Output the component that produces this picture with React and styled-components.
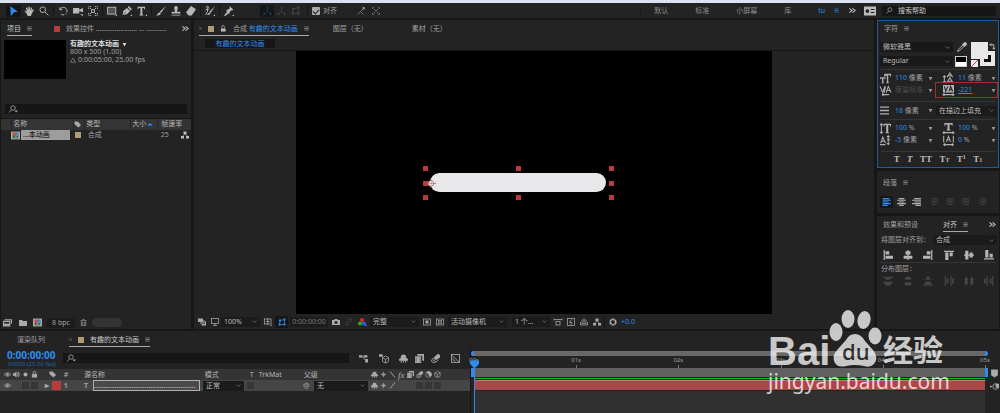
import React from "react";
import styled, { createGlobalStyle, css } from "styled-components";

const c = {
  gap: "#171717",
  panel: "#232323",
  field: "#161616",
  head: "#343434",
  text: "#a0a0a0",
  bright: "#c8c8c8",
  blue: "#2d8ceb",
  navy: "#1f62a5",
  tan: "#b09b75",
  red: "#b93b3b",
};

const Global = createGlobalStyle`
  * { box-sizing: border-box; }
  body { margin: 0; background: ${c.gap}; }
  body, button, input, select {
    font-family: "Noto Sans", "Noto Sans CJK SC", sans-serif;
    font-size: 7px;
    line-height: 10px;
    color: ${c.text};
  }
  button { background: none; border: 0; padding: 0; margin: 0; cursor: pointer; white-space: nowrap; }
  input { margin: 0; }
  svg { display: block; flex: none; overflow: visible; }
`;

/* ---------- icons, all on a 16 unit grid ---------- */
const P = (d, o) => <path d={d} {...o} />;
const F = (d) => <path d={d} fill="currentColor" stroke="none" />;
const cube = P("M8 1L14 4V12L8 15L2 12V4ZM2 4L8 8L14 4M8 8V15");
const glyphs = {
  arrow: F("M2 0L14 9L8 10L3 16Z"),
  hand: F("M1 8L3 7L5 9L3 3L5 2L7 7L7 1L9 1L10 7L11 2L13 3L12 8L14 5L16 6L12 13L11 16H6L4 12Z"),
  zoom: <><circle cx="6" cy="6" r="4.5" />{P("M9.5 9.5L15 15")}</>,
  rotate: P("M3 2V6H7M3 6A6 6 0 1 1 5 13", { strokeDasharray: "18 2 2 2" }),
  camera: F("M0 4Q0 3 1 3H10V6L16 3V10L10 8V12H0ZM11 13L16 13L16 16Z"),
  anchor: <>{P("M1 5V1H5M11 1H15V5M15 11V15H11M5 15H1V11", { strokeDasharray: "2 1" })}<circle cx="8" cy="8" r="2.5" />{P("M3 3L6 6M13 3L10 6M3 13L6 10M13 13L10 10")}</>,
  rect: <><rect x="1" y="2" width="13" height="11" fill="#555" />{F("M13 16H16V13Z")}</>,
  pen: F("M1 15L2 8L8 3L13 8L8 13L2 14.500L6 10L5.500 9ZM9 2L11 0L16 5L14 7ZM13 16H16V13Z"),
  type: F("M1 1H13V5H12L11 3H8.500V13L10 14V15H4V14L5.500 13V3H3L2 5H1ZM13 16H16V13Z"),
  brush: F("M16 0L8 11L6 9ZM5 10L8 12Q6 16 0 15Q3 14 3 12Z"),
  stamp: F("M5 3A3 3 0 0 1 11 3L9.500 9H15V12H1V9H6.500ZM1 14H15V15H1Z"),
  eraser: F("M8 0L16 5L9 15H4L0 10ZM4 11L7 14H5Z"),
  roto: <>{F("M16 0L9 11L7 9ZM7 10L9 12Q7 15 3 14ZM13 16H16V13Z")}<circle cx="4" cy="2" r="1.500" />{P("M4 4V9L1 14M1 6L7 5")}</>,
  pin: F("M9 0L15 6L13 7L11 7L9 10L9 12L7 12L2 16L0 15L5 9L4 8L4 6L6 6L9 4ZM13 16H16V13Z"),
  axis: <>{P("M8 2V9L2 14M8 9L14 14")}{F("M8 0L10 4H6ZM0 16L2 11L5 15ZM16 16L11 15L14 11Z")}</>,
  snap1: <>{P("M1 15L7 9L13 15M7 9L13 3")}{F("M11 0H16V5H11Z")}</>,
  snap2: <>{P("M1 4V1H4M12 1H15V4M15 12V15H12M4 15H1V12M4 4L12 12M12 4L4 12", { strokeDasharray: "3 1" })}</>,
  close: P("M2 2L14 14M14 2L2 14", { strokeWidth: 4 }),
  menu: P("M1 3H15M1 8H15M1 13H15"),
  chevrons: P("M1 3L7 8L1 13M8 3L14 8L8 13", { strokeWidth: 2.500 }),
  card: <>{F("M0 2H16V14H0Z")}<circle cx="4.500" cy="8" r="2.500" fill="#232323" stroke="none" />{P("M9 6H14M9 10H14", { stroke: "#232323" })}</>,
  search: <><circle cx="9" cy="6" r="4.500" />{P("M6 9.500L1 15")}</>,
  searchDown: <><circle cx="8" cy="6" r="4.500" />{P("M5 9.500L0 15")}{F("M11 11H18L14.500 15Z")}</>,
  chevron: P("M2 5L8 11L14 5"),
  down: F("M2 3H14L8 14Z"),
  up: F("M0 12H16L8 5Z"),
  right: F("M2 2V14L15 8Z"),
  lock: <>{F("M2 7H14V15H2Z")}{P("M5 7V4A3 3 0 0 1 11 4V7", { strokeWidth: 2 })}</>,
  unlock: <>{F("M2 8H13V15H2Z")}{P("M4 8V4A3 3 0 0 1 10 4V7")}</>,
  tag: F("M1 1H7L10 3L16 9L10 15L1 7Z"),
  tree: <>{F("M5 1H11V6H5ZM0 10H6V15H0ZM10 10H16V15H10Z")}{P("M8 6L3 10M8 6L13 10")}</>,
  triangle: P("M8 3L15 14H1Z"),
  comp: <><rect x="0" y="1" width="16" height="14" fill="#aaa" stroke="none" /><rect x="3" y="3" width="10" height="10" fill="#555" stroke="none" /><circle cx="6" cy="6" r="3" fill="#d44" stroke="none" /><rect x="8" y="4" width="5" height="5" fill="#39c" stroke="none" /><path d="M8 8L12 13H5Z" fill="#5a5" stroke="none" /></>,
  footage: <>{P("M3 3H15V10M1 6V14H12V6Z", { strokeWidth: 2 })}{F("M1 10H12V14H1Z")}</>,
  folder: F("M0 2H6L8 4H16V14H0Z"),
  trash: <>{F("M6 0H10V2H15V4H1V2H6Z")}{P("M3 5V15H13V5M6 6V13M10 6V13", { strokeWidth: 2 })}</>,
  layers: <>{F("M0 1H10V8H0ZM11 4H13V11H4V9H11ZM14 7H16V15H7V12H14Z")}</>,
  monitor: <><rect x="1" y="1" width="14" height="10" />{P("M8 11V14M4 15H12")}</>,
  region: <><rect x="1" y="2" width="13" height="10" />{P("M7.500 0V14M4 7H11M13 15H16")}</>,
  mask: <>{P("M3 13L4 5L13 3V13Z")}{F("M1 11H5V15H1ZM2 3H6V7H2ZM11 1H15V5H11ZM11 11H15V15H11Z")}</>,
  photo: <>{F("M0 4H4L6 2H10L12 4H16V14H0Z")}<circle cx="8" cy="9" r="3" fill="#232323" stroke="none" /></>,
  link: <>{P("M7 4L10 1Q14 1 13 5L10 8M9 7L5 6L1 10Q1 15 5 14L9 11")}</>,
  rgb: <><circle cx="8" cy="4" r="4" fill="#e32222" stroke="none" /><circle cx="4" cy="11" r="4" fill="#20b020" stroke="none" /><circle cx="12" cy="11" r="4" fill="#3157ef" stroke="none" />{F("M14 16H17V13Z")}</>,
  boxed: <><rect x="1" y="2" width="14" height="12" />{F("M5 5H11V11H5Z")}</>,
  checker: <><rect x="1" y="2" width="14" height="12" />{F("M4 4H7V7H4ZM9 4H12V7H9ZM7 7H9V9H7ZM4 9H7V12H4ZM9 9H12V12H9Z")}</>,
  views: <>{P("M0 3H16M0 1V5M16 1V5")}<rect x="4" y="7" width="8" height="7" /></>,
  fast: <><rect x="1" y="1" width="14" height="14" />{P("M9 3L5 9H10L7 14")}</>,
  chart: <>{P("M1 8V14H15V8M4 3V11H12V3")}{F("M7 1H9V9H7Z")}</>,
  aperture: <><circle cx="8" cy="8" r="5.500" strokeWidth="3.500" strokeDasharray="5 .8" /></>,
  eye: <>{P("M0 8Q8 0 16 8Q8 16 0 8Z")}<circle cx="8" cy="8" r="2.500" fill="currentColor" /></>,
  speaker: <>{F("M0 5H3L8 1V15L3 11H0Z")}{P("M10 4Q13 8 10 12M12 2Q17 8 12 14", { strokeWidth: 2 })}</>,
  dot: <circle cx="8" cy="8" r="4.500" fill="currentColor" stroke="none" />,
  flow: <>{P("M5 4L13 12")}{F("M0 2H6V6H0ZM8 2H15V6H8ZM11 9H16V15H11Z")}</>,
  draft: <>{F("M0 2H6V6H0Z")}<g transform="translate(4 4) scale(.8)">{cube}</g></>,
  shy: <>{F("M3 7Q3 1 8 1Q13 1 13 7L16 9V12H0V9Z")}{P("M4 12V15M12 12V15M8 9V15", { strokeWidth: 2 })}</>,
  film: <>{F("M4 0H16V12H13V3H4ZM0 4H11V16H0Z")}{P("M2 5V15M9 5V15", { stroke: "#232323", strokeDasharray: "1 1" })}</>,
  blur: <>{F("M5 6L12 0Q17 0 16 6L10 10Q5 11 5 6Z")}{P("M3 7Q2 12 8 13M1 10Q0 16 7 15L13 11")}</>,
  graph: <><rect x="1" y="1" width="14" height="14" />{P("M0 1L15 15M3 8Q4 13 8 13")}</>,
  sun: <>{P("M8 2V14M2 8H14")}<circle cx="8" cy="8" r="3" /></>,
  anchorPoint: <><circle cx="7" cy="8" r="5" fill="#e8e8ea" />{P("M0 8H4M10 8H16M7 0V4M7 12V16")}<circle cx="7" cy="8" r="1" /></>,
  slashB: P("M2 1L14 15", { strokeWidth: 2 }),
  slash: P("M2 15L14 1", { strokeWidth: 2 }),
  half: <><circle cx="8" cy="8" r="6.500" />{F("M3 3A7 7 0 0 1 13 13Q7 12 8 8Z")}</>,
  cube,
  spiral: P("M10 10A3 3 0 1 1 10 6V10Q14 12 14 8A6 6 0 1 0 11 14"),
  dropper: <>{P("M1 15L2 12L9 5L11 7L4 14Z")}{F("M8 4L12 0Q16 0 16 4L12 8Z")}</>,
  sizeT: F("M0 6H8V9H7V8H5V14H6V15H2V14H3V8H1V9H0ZM6 1H16V5H15L14 3H12V13L13 14V15H9V14L10 13V4H8V5H6Z"),
  leading: <>{P("M6 6L10 0L14 6M7 4H13M5 15L10 7L15 15M7 12H13M2 4V14M0 6L2 4L4 6M0 12L2 14L4 12")}</>,
  kern: <>{P("M0 2L4 11L7 2M8 2L6 11M9 11L12 2L16 11M10 8H15M3 14H13M3 14L5 12M3 14L5 16")}</>,
  track: <>{F("M0 0H16V11H0Z")}{P("M2 2L4 9L7 2M9 9L11 2L14 9M9 7H13", { stroke: "#222" })}{P("M0 14H16M2 12L0 14L2 16M14 12L16 14L14 16")}</>,
  stroke: P("M0 2H16M0 8H16M0 14H16", { strokeWidth: 2.500 }),
  vscale: <>{F("M5 1H16V5H15L14 3H12V13L13 14V15H8V14L9 13V3H7L6 5H5Z")}{P("M2 1V15M0 3L2 1L4 3M0 13L2 15L4 13")}</>,
  hscale: <>{F("M2 0H14V4H13L12 2H9.500V9L11 10V11H5V10L6.500 9V2H4L3 4H2Z")}{P("M0 14H16M2 12L0 14L2 16M14 12L16 14L14 16")}</>,
  shift: <>{P("M1 12L4 3L8 12M2 9H7M0 14H8M12 1V14M10 3L12 1L14 3M10 7H15M10 12L12 14L14 12")}</>,
  tsume: <>{P("M1 1V11M15 1V11M5 10L8 2L11 10M6 7H10M1 14H15M3 12L1 14L3 16M13 12L15 14L13 16")}</>,
  alL: P("M1 1H13M1 4H16M1 7H12M1 10H16M1 13H10", { strokeWidth: 2 }),
  alC: P("M3 1H13M0 4H16M3 7H13M0 10H16M4 13H12", { strokeWidth: 2 }),
  alR: P("M4 1H16M0 4H16M4 7H16M0 10H16M6 13H16", { strokeWidth: 2 }),
  boxL: F("M1 0H3V16H1ZM4 2H10V7H4ZM4 9H16V14H4Z"),
  boxH: F("M7 0H9V2H12V7H9V9H15V14H9V16H7V14H1V9H7V7H4V2H7Z"),
  boxR: F("M13 0H15V16H13ZM6 2H12V7H6ZM0 9H12V14H0Z"),
  boxT: F("M0 1H16V3H0ZM2 4H7V16H2ZM9 4H14V10H9Z"),
  boxV: F("M2 1H7V7H9V4H14V7H16V9H14V12H9V9H7V15H2V9H0V7H2Z"),
  boxB: F("M0 13H16V15H0ZM2 0H7V12H2ZM9 6H14V12H9Z"),
  disV: F("M0 1H16V3H12V6H4V3H0ZM0 9H16V11H13V15H3V11H0Z"),
  disM: F("M4 1H12V3H16V4H12V6H4V4H0V3H4ZM3 10H13V12H16V13H13V15H3V13H0V12H3Z"),
  disB: F("M5 1H11V5H16V6H0V5H5ZM3 9H13V13H16V15H0V13H3Z"),
  disH: F("M1 0H3V16H1ZM4 4H7V12H4ZM10 0H12V16H10ZM13 4H16V12H13Z"),
  disC: F("M3 0H4V3H6V13H4V16H3V13H1V3H3ZM12 0H13V3H15V13H13V16H12V13H10V3H12Z"),
  disR: F("M0 4H3V12H0ZM4 0H6V16H4ZM9 4H12V12H9ZM13 0H15V16H13Z"),
  swap: P("M2 4H11V14M2 4L5 1M2 4L5 7M8 11L11 14L14 11", { strokeWidth: 2 }),
  marker: F("M2 1H14V11L8 15L2 11Z"),
  head: F("M0 1H16V7L8 15L0 7Z"),
  target: <><circle cx="10" cy="8" r="5" />{F("M10 3H16V10H10ZM0 6L5 8L0 10Z")}</>,
};

function Icon({ name, size = 10, color = "#aaa", weight = 1.5 }) {
  return (
    <svg width={size} height={size} viewBox="0 0 16 16" fill="none" stroke={color} strokeWidth={weight} color={color} aria-hidden="true">
      {glyphs[name]}
    </svg>
  );
}

/* ---------- shared parts ---------- */
const Shell = styled.div`
  display: flex;
  flex-direction: column;
  min-height: 100vh;
  position: relative;
`;
const WindowEdge = styled.div`height: 3px; background: #dde1f1;`;
const Row = styled.div`
  display: flex;
  align-items: center;
  gap: ${(p) => p.$gap || 0}px;
  height: ${(p) => (p.$h ? p.$h + "px" : "auto")};
  padding: ${(p) => p.$pad || 0};
`;
const Spacer = styled.div`flex: 1;`;
const Divider = styled.div`width: 1px; height: 12px; margin: 0 1px; background: #171717;`;
const ToolDivider = styled(Divider)`margin: 0 1px 0 2px;`;
const Rule = styled.div`height: 1px; margin: 0 3px; background: #353535;`;
const Panel = styled.section`background: ${c.panel}; min-width: 0;`;
const Chip = styled.span`width: ${(p) => p.$s || 6}px; height: ${(p) => p.$s || 6}px; background: ${(p) => p.$c}; flex: none;`;
const IconButton = styled.button`
  display: flex;
  align-items: center;
  justify-content: center;
  width: ${(p) => p.$w || 13}px;
  height: 12px;
  flex: none;
  background: ${(p) => (p.$on ? "#161616" : "none")};
`;
const Tab = styled.button`
  display: flex;
  align-items: center;
  gap: 6px;
  height: 16px;
  padding-top: 2px;
  color: ${(p) => (p.$blue ? c.blue : p.$on ? c.bright : c.text)};
  border-bottom: 1px solid ${(p) => (p.$on ? "#aaa" : "transparent")};
`;
const SearchBox = styled.label`
  display: flex;
  align-items: center;
  gap: 5px;
  height: 10px;
  padding: 0 4px;
  background: ${c.field};
  width: ${(p) => p.$w}px;
  min-width: 0;
`;
const SearchInput = styled.input`
  flex: 1;
  min-width: 0;
  height: 10px;
  padding: 0;
  border: 0;
  outline: 0;
  background: none;
  &::placeholder { color: ${c.bright}; opacity: 1; }
`;
const SelectWrap = styled.span`
  display: inline-grid;
  align-items: center;
  width: ${(p) => p.$w}px;
  height: 10px;
  background: ${(p) => p.$bg || "#1b1b1b"};
  flex: none;
  > * { grid-area: 1 / 1; }
  > svg { justify-self: end; margin-right: 3px; pointer-events: none; }
`;
const SelectBox = styled.select`
  appearance: none;
  width: 100%;
  height: 10px;
  padding: 0 10px 0 3px;
  border: 0;
  background: none;
  color: #bcbcbc;
`;
function Select({ label, value, w, bg }) {
  return (
    <SelectWrap $w={w} $bg={bg}>
      <SelectBox aria-label={label} defaultValue={value}><option>{value}</option></SelectBox>
      <Icon name="chevron" size={5} color="#888" weight={2} />
    </SelectWrap>
  );
}

/* ---------- tool bar ---------- */
const Toolbar = styled.header`
  display: flex;
  align-items: center;
  height: 15px;
  padding: 0 4px 0 6px;
  background: ${c.panel};
  margin-bottom: 2px;
`;
const Workspaces = styled.nav`
  display: flex;
  align-items: center;
  gap: 27px;
  margin-right: 8px;
  padding-left: 13px;
  border-left: 1px solid #1b1b1b;
`;
const WorkspaceButton = styled.button`color: ${(p) => (p.$on ? c.blue : "#8c8c8c")};`;
const SnapLabel = styled.label`
  display: flex;
  align-items: center;
  gap: 3px;
  margin: 0 16px 0 3px;
`;
const Tick = styled.input`
  appearance: none;
  width: 8px;
  height: 8px;
  background: #aaa;
  border-radius: 1px;
  display: grid;
  place-items: center;
  &:checked::after {
    content: "";
    width: 5px;
    height: 3px;
    border: solid #222;
    border-width: 0 0 1px 1px;
    transform: rotate(-45deg);
  }
`;
const toolGroups = [
  [["arrow", "选取"], ["hand", "手形"], ["zoom", "缩放"]],
  [["rotate", "旋转"], ["camera", "摄像机"], ["anchor", "锚点"]],
  [["rect", "矩形"], ["pen", "钢笔"], ["type", "文字"]],
  [["brush", "画笔"], ["stamp", "图章"], ["eraser", "橡皮擦"]],
  [["roto", "Roto"]],
  [["pin", "操控"]],
];

function TopBar() {
  return (
    <Toolbar>
      {toolGroups.map((g, i) => (
        <React.Fragment key={i}>
          {i > 0 && <ToolDivider />}
          {g.map(([n, l]) => (
            <IconButton key={n} $w={15} $on={n === "arrow"} aria-label={l}>
              <Icon name={n} size={10} color={n === "arrow" ? c.blue : "#b8b8b8"} />
            </IconButton>
          ))}
        </React.Fragment>
      ))}
      <Row $pad="0 4px 0 24px">
        <IconButton $w={14} $on aria-label="本地轴"><Icon name="axis" size={9} color="#16446f" /></IconButton>
        <IconButton $w={14} aria-label="世界轴"><Icon name="axis" size={9} color="#444" /></IconButton>
        <IconButton $w={14} aria-label="视图轴"><Icon name="mask" size={9} color="#444" /></IconButton>
      </Row>
      <Divider />
      <SnapLabel><Tick type="checkbox" defaultChecked />对齐</SnapLabel>
      <IconButton $w={15} aria-label="边缘"><Icon name="snap1" size={8} color="#888" /></IconButton>
      <IconButton $w={15} aria-label="折叠"><Icon name="snap2" size={8} color="#888" /></IconButton>
      <Spacer />
      <Workspaces>
        {["默认", "标准", "小屏幕", "库"].map((w) => <WorkspaceButton key={w}>{w}</WorkspaceButton>)}
        <WorkspaceButton $on>tu</WorkspaceButton>
      </Workspaces>
      <IconButton $w={7} aria-label="菜单"><Icon name="menu" size={5} color={c.blue} weight={2} /></IconButton>
      <Row $pad="0 4px 0 9px"><Icon name="chevrons" size={7} color="#bbb" /></Row>
      <Divider />
      <Row $pad="0 6px 0 1px"><Icon name="card" size={12} color="#bbb" /></Row>
      <SearchBox $w={114}>
        <Icon name="search" size={7} />
        <SearchInput aria-label="搜索帮助" placeholder="搜索帮助" />
      </SearchBox>
    </Toolbar>
  );
}

/* ---------- project panel ---------- */
const Main = styled.main`
  flex: 1;
  display: grid;
  grid-template-columns: 190px minmax(0, 1fr) 122px;
  gap: 3px;
  padding: 0 1px;
`;
const ProjectPanel = styled(Panel)`display: flex; flex-direction: column;`;
const Thumb = styled.div`width: 62px; height: 39px; background: #000; flex: none;`;
const CompInfo = styled.div`line-height: 8px; white-space: nowrap;`;
const CompName = styled.div`
  display: flex;
  align-items: center;
  gap: 3px;
  color: #ddd;
  font-weight: 700;
`;
const Col = styled.col`width: ${(p) => p.$w}px;`;
const ProjectTable = styled.table`
  width: 100%;
  margin-top: 4px;
  border-collapse: collapse;
  table-layout: fixed;
  border-top: 1px solid #161616;
  th, td { padding: 0; font-weight: 400; text-align: left; height: 11px; white-space: nowrap; }
  thead { background: ${c.head}; color: #b5b5b5; }
  th + th { border-left: 1px solid #242424; }
`;
const Selected = styled.span`
  display: block;
  width: 49px;
  height: 10px;
  padding-left: 2px;
  background: #9d9d9d;
  color: #1c1c1c;
  font-weight: 500;
`;
const BitDepth = styled.button`
  width: 28px;
  height: 10px;
  background: #1c1c1c;
`;
const Pill = styled.span`width: 30px; height: 9px; border-radius: 5px; background: #343434;`;

function Project() {
  return (
    <ProjectPanel>
      <Row $pad="0 2px 0 6px">
        <Row $gap={22}>
          <Tab $on>项目<Icon name="menu" size={5} weight={2} /></Tab>
          <Tab><Chip $c={c.red} />效果控件 ...................... ... ...........</Tab>
        </Row>
        <Spacer />
        <Icon name="chevrons" size={7} color="#bbb" />
      </Row>
      <Row $gap={4} $pad="4px 3px 0">
        <Thumb />
        <CompInfo>
          <CompName>有趣的文本动画 <Icon name="down" size={5} color="#ddd" /></CompName>
          <div>800 x 500 (1.00)</div>
          <Row $gap={2}><Icon name="triangle" size={6} />0:00:05:00, 25.00 fps</Row>
          <Row $h={15} />
        </CompInfo>
      </Row>
      <Row $h={35} $pad="25px 4px 0">
        <SearchBox $w={182}>
          <Icon name="searchDown" size={8} />
          <SearchInput aria-label="搜索项目" />
        </SearchBox>
      </Row>
      <ProjectTable>
        <colgroup>{[10, 62, 11, 46, 27].map((w) => <Col key={w} $w={w} />)}<col /></colgroup>
        <thead>
          <tr><th /><th>&nbsp;名称</th><th><Icon name="tag" size={7} /></th><th>&nbsp;类型</th><th><Row $gap={1}>&nbsp;大小<Icon name="up" size={6} color={c.blue} /></Row></th><th>&nbsp;&nbsp;帧速率</th></tr>
        </thead>
        <tbody>
          <tr>
            <td colSpan={2}><Row $gap={1} $pad="0 0 0 10px"><Icon name="comp" size={9} /><Selected>...本动画</Selected></Row></td>
            <td><Row $pad="0 2px"><Chip $c={c.tan} /></Row></td><td>&nbsp;&nbsp;合成</td><td />
            <td><Row $gap={12} $pad="0 2px">&nbsp;25<Icon name="tree" size={8} color="#bbb" /></Row></td>
          </tr>
        </tbody>
      </ProjectTable>
      <Spacer />
      <Row $h={13} $gap={4} $pad="0 1px">
        <IconButton $w={11} aria-label="解释素材"><Icon name="footage" size={9} /></IconButton>
        <IconButton $w={11} aria-label="新建文件夹"><Icon name="folder" size={8} /></IconButton>
        <IconButton $w={11} aria-label="新建合成"><Icon name="comp" size={9} /></IconButton>
        <BitDepth>8 bpc</BitDepth>
        <IconButton $w={9} aria-label="删除"><Icon name="trash" size={7} color="#888" /></IconButton>
        <Pill />
      </Row>
    </ProjectPanel>
  );
}

/* ---------- composition viewer ---------- */
const Viewer = styled(Panel)`display: flex; flex-direction: column;`;
const ViewerWord = styled.span`color: ${c.text};`;
const Crumb = styled.button`
  width: 70px;
  height: 9px;
  background: ${c.field};
  color: ${c.blue};
`;
const CrumbBar = styled.div`
  display: flex;
  align-items: center;
  height: 15px;
  padding: 0 11px;
  border-bottom: 1px solid #161616;
`;
const Stage = styled.div`flex: 1; display: flex; justify-content: center;`;
const Canvas = styled.div`position: relative; width: 70%; background: #000;`;
const TextLayer = styled.div`
  position: absolute;
  left: 127px;
  top: 115px;
  width: 191px;
  height: 34px;
  padding: 7px 8px 8px 7px;
`;
const Bar = styled.div`height: 19px; border-radius: 10px; background: #e8e8ea;`;
const Handle = styled.i`
  position: absolute;
  width: 5px;
  height: 5px;
  background: ${c.red};
  left: ${(p) => p.$x}px;
  top: ${(p) => p.$y}px;
`;
const AnchorMark = styled.span`position: absolute; left: 4px; top: 13px;`;
const ViewBar = styled.div`
  display: flex;
  align-items: center;
  height: 15px;
  padding-left: 1px;
`;
const HotText = styled.button`
  color: ${(p) => (p.$dim ? "#777" : c.blue)};
  width: ${(p) => (p.$w ? p.$w + "px" : "auto")};
  height: 10px;
  background: ${(p) => (p.$dim ? "#1c1c1c" : "none")};
  text-decoration: ${(p) => (p.$u ? "underline" : "none")};
`;

const ViewIcon = ({ n, l, on, color }) => (
  <IconButton $on={on} aria-label={l}><Icon name={n} size={8} color={color} /></IconButton>
);

function Composition() {
  return (
    <Viewer>
      <Row $gap={24} $pad="0 5px">
        <Tab $on $blue>
          <Icon name="close" size={3} color="#777" />
          <Chip $c={c.tan} />
          <Icon name="unlock" size={7} color="#bbb" />
          <span><ViewerWord>合成 </ViewerWord>有趣的文本动画</span>
          <Icon name="menu" size={5} weight={2} />
        </Tab>
        <Tab>图层（无）</Tab>
        <Row $pad="0 0 0 20px"><Tab>素材（无）</Tab></Row>
      </Row>
      <CrumbBar><Crumb>有趣的文本动画</Crumb></CrumbBar>
      <Stage>
        <Canvas>
          <TextLayer>
            <Bar />
            {[0, 93, 186].map((x) => [0, 15, 29].map((y) => (x === 93 && y === 15 ? null : <Handle key={x + "-" + y} $x={x} $y={y} />)))}
            <AnchorMark><Icon name="anchorPoint" size={9} color="#b86a6a" /></AnchorMark>
          </TextLayer>
        </Canvas>
      </Stage>
      <ViewBar>
        <ViewIcon n="layers" l="始终预览" />
        <ViewIcon n="monitor" l="主查看器" />
        <Row $gap={1}><Select label="放大率" value="100%" w={39} /><ViewIcon n="region" l="网格" /><ViewIcon n="mask" l="蒙版" on color={c.blue} /></Row>
        <Row $pad="0 1px 0 2px"><HotText $dim $w={38}>0:00:00:00</HotText></Row>
        <ViewIcon n="photo" l="快照" /><ViewIcon n="link" l="显示快照" color="#484848" /><ViewIcon n="rgb" l="通道" />
        <Row $pad="0 1px 0 2px"><Select label="分辨率" value="完整" w={49} /></Row>
        <ViewIcon n="boxed" l="目标区域" /><ViewIcon n="checker" l="透明网格" />
        <Row $gap={5} $pad="0 1px 0 2px"><Select label="视图" value="活动摄像机" w={59} /><Select label="视图布局" value="1 个..." w={38} /></Row>
        <ViewIcon n="views" l="像素长宽比" /><ViewIcon n="fast" l="快速预览" /><ViewIcon n="chart" l="时间轴" /><ViewIcon n="tree" l="流程图" />
        <Divider />
        <ViewIcon n="aperture" l="重置曝光度" /><Row $pad="0 2px"><HotText>+0.0</HotText></Row>
      </ViewBar>
    </Viewer>
  );
}

/* ---------- right column ---------- */
const Side = styled.aside`
  display: flex;
  flex-direction: column;
  gap: 3px;
  min-width: 0;
`;
const CharPanel = styled(Panel)`
  height: 148px;
  border: 1px solid #1f5c9c;
`;
const PanelTitle = styled.h2`
  display: flex;
  align-items: center;
  gap: 6px;
  margin: 0;
  padding: 0 6px;
  height: ${(p) => p.$h}px;
  font-size: 7px;
  font-weight: 400;
`;
const FontGrid = styled.div`
  display: grid;
  grid-template-columns: 73px 18px 26px;
  grid-template-rows: 14px 14px;
  align-items: center;
  justify-items: start;
  height: 28px;
  padding: 0 2px;
  margin-top: 4px;
`;
const Swatches = styled.div`
  grid-area: 1 / 3 / 3 / 4;
  position: relative;
  width: 25px;
  height: 25px;
`;
const FillSwatch = styled.span`
  position: absolute;
  width: 17px;
  height: 17px;
  background: #e8e8ea;
`;
const StrokeSwatch = styled.span`
  position: absolute;
  left: 9px;
  top: 9px;
  width: 15px;
  height: 15px;
  border: 4px solid #e8e8ea;
  background: #111;
`;
const SwapMark = styled.span`position: absolute; left: 18px; top: 1px;`;
const NoColor = styled.span`
  position: absolute;
  left: 0;
  top: 18px;
  width: 7px;
  height: 7px;
  background: linear-gradient(135deg, #eee 43%, ${c.red} 43% 57%, #eee 57%);
`;
const BlackWhite = styled.span`
  width: 12px;
  height: 11px;
  border: 1px solid #ccc;
  background: linear-gradient(#000 50%, #fff 50%);
`;
const Props = styled.div`
  display: grid;
  grid-template-columns: 54px 59px;
  grid-auto-rows: 12px;
  gap: 0 4px;
  padding: 2px 1px 5px;
`;
const Prop = styled.div`
  display: grid;
  grid-template-columns: 15px 1fr 5px;
  align-items: center;
  padding-left: 1px;
  white-space: nowrap;
  &:nth-child(even) { padding-left: 6px; }
  ${(p) => p.$marked && css`outline: 1px solid #a32f2f; outline-offset: 1px;`}
`;
const Unit = styled.span`color: ${(p) => (p.$off ? "#4c4c4c" : c.text)};`;
const StrokeProp = styled(Prop)`width: 54px;`;
const StyleButtons = styled.div`
  display: flex;
  justify-content: space-around;
  align-items: center;
  height: 14px;
  padding: 0 12px;
`;
const StyleButton = styled.button`
  display: flex;
  height: 10px;
  font-family: "Liberation Serif", serif;
  font-size: 9px;
  font-weight: 700;
  color: #bbb;
  font-style: ${(p) => (p.$i ? "italic" : "normal")};
`;
const Mini = styled.span`
  align-self: ${(p) => (p.$top ? "flex-start" : "flex-end")};
  font-size: 6px;
  line-height: ${(p) => (p.$top ? 6 : 8)}px;
`;
const ParaPanel = styled(Panel)`height: 42px;`;
const AlignPanel = styled(Panel)`flex: 1;`;
const IconLine = styled.div`
  display: flex;
  align-items: center;
  justify-content: space-between;
  height: 13px;
  padding: 0 5px 0 6px;
`;

function Value({ icon, value, unit, off, marked }) {
  return (
    <Prop $marked={marked}>
      <Icon name={icon} size={11} color="#b0b0b0" />
      <Unit $off={off}>{value && <HotText $u={marked}>{value}</HotText>} {unit}</Unit>
      <Icon name="down" size={5} color="#999" />
    </Prop>
  );
}

function SidePanels() {
  return (
    <Side>
      <CharPanel>
        <PanelTitle $h={15}>字符<Icon name="menu" size={5} weight={2} /></PanelTitle>
        <FontGrid>
          <Select label="字体" value="微软雅黑" w={73} bg="#191919" />
          <Row $pad="0 2px"><IconButton aria-label="吸管"><Icon name="dropper" size={10} color="#bbb" /></IconButton></Row>
          <Swatches>
            <StrokeSwatch /><FillSwatch /><NoColor />
            <SwapMark><Icon name="swap" size={7} color="#ccc" /></SwapMark>
          </Swatches>
          <Select label="字形" value="Regular" w={73} bg="#191919" />
          <Row $pad="0 2px"><BlackWhite /></Row>
        </FontGrid>
        <Row $h={1} />
        <Rule />
        <Props>
          <Value icon="sizeT" value="110" unit="像素" />
          <Value icon="leading" value="11" unit="像素" />
          <Value icon="kern" unit="度量标准" off />
          <Value icon="track" value="-221" marked />
        </Props>
        <Rule />
        <Row $h={17} $gap={3} $pad="0 1px">
          <StrokeProp>
            <Icon name="stroke" size={9} color="#b0b0b0" />
            <Unit><HotText>18</HotText> 像素</Unit>
            <Icon name="down" size={5} color="#999" />
          </StrokeProp>
          <Select label="描边方式" value="在描边上填充" w={61} />
        </Row>
        <Rule />
        <Props>
          <Value icon="vscale" value="100" unit="%" />
          <Value icon="hscale" value="100" unit="%" />
          <Value icon="shift" value="-5" unit="像素" />
          <Value icon="tsume" value="0" unit="%" />
        </Props>
        <Rule />
        <StyleButtons>
          <StyleButton>T</StyleButton><StyleButton $i>T</StyleButton><StyleButton>TT</StyleButton>
          <StyleButton>T<Mini>T</Mini></StyleButton><StyleButton>T<Mini $top>1</Mini></StyleButton><StyleButton>T<Mini>1</Mini></StyleButton>
        </StyleButtons>
      </CharPanel>
      <ParaPanel>
        <PanelTitle $h={23}>段落<Icon name="menu" size={5} weight={2} /></PanelTitle>
        <Row $h={16} $gap={2} $pad="0 0 0 3px">
          <IconButton $on aria-label="左对齐"><Icon name="alL" size={9} color={c.blue} /></IconButton>
          <IconButton aria-label="居中"><Icon name="alC" size={9} /></IconButton>
          <IconButton aria-label="右对齐"><Icon name="alR" size={9} /></IconButton>
          <Row $gap={2} $pad="0 0 0 3px">
            {["alL", "alC", "alR"].map((n) => <IconButton key={n} aria-label="两端对齐"><Icon name={n} size={8} color="#3c3c3c" /></IconButton>)}
          </Row>
          <Row $pad="0 0 0 3px"><IconButton aria-label="全部两端对齐"><Icon name="alC" size={8} color="#3c3c3c" /></IconButton></Row>
        </Row>
      </ParaPanel>
      <AlignPanel>
        <Row $pad="0 3px 0 6px">
          <Tab>效果和预设</Tab>
          <Row $pad="0 0 0 25px"><Tab $on>对齐<Icon name="menu" size={5} weight={2} /></Tab></Row>
          <Spacer />
          <Icon name="chevrons" size={7} color="#bbb" />
        </Row>
        <Row $h={16} $pad="0 2px 0 4px">将图层对齐到：<Spacer /><Select label="对齐到" value="合成" w={64} /></Row>
        <IconLine>
          {["boxL", "boxH", "boxR", "boxT", "boxV", "boxB"].map((n) => <IconButton key={n} $w={10} aria-label={n}><Icon name={n} size={10} color="#b5b5b5" /></IconButton>)}
        </IconLine>
        <Row $h={1} />
        <Rule />
        <Row $h={11} $pad="0 4px">分布图层：</Row>
        <IconLine>
          {["disV", "disM", "disB", "disH", "disC", "disR"].map((n) => <IconButton key={n} $w={10} aria-label="分布"><Icon name={n} size={10} color="#454545" /></IconButton>)}
        </IconLine>
      </AlignPanel>
    </Side>
  );
}

/* ---------- timeline ---------- */
const Timeline = styled.section`
  height: 82px;
  margin-top: 2px;
  background: ${c.panel};
`;
const TimelineBody = styled.div`
  display: grid;
  grid-template-columns: 470px minmax(0, 1fr);
  height: 66px;
`;
const Timecode = styled.div`
  width: 63px;
  padding: 2px 0 0 7px;
  color: ${c.blue};
  font-size: 10px;
  font-weight: 700;
  line-height: 10px;
`;
const Frames = styled.div`
  color: ${c.navy};
  font-size: 6px;
  font-weight: 400;
  line-height: 8px;
  padding-left: 1px;
`;
const LayerTable = styled.table`
  width: 100%;
  table-layout: fixed;
  border-collapse: collapse;
  th, td { padding: 0; height: 11px; font-weight: 400; text-align: left; white-space: nowrap; }
  thead { background: ${c.head}; color: #b5b5b5; }
  tbody { background: #454545; }
`;
const Box = styled.i`display: block; width: 7px; height: 7px; background: #363636;`;
const Fx = styled.i`width: 7px; font-family: "Liberation Serif", serif; font-size: 9px;`;
const NameInput = styled.input`
  display: block;
  width: 107px;
  height: 11px;
  padding: 0;
  border: 1px solid #b0b0b0;
  background: #4a4a4a;
  color: #ccc;
`;
const Tracks = styled.div`
  position: relative;
  display: flex;
  flex-direction: column;
  border-left: 1px solid #161616;
  padding: 4px 15px 0 3px;
`;
const Navigator = styled.div`
  height: 5px;
  background: #686868;
  border: solid ${c.blue};
  border-width: 0 3px;
  border-radius: 3px;
  margin: 0 -3px;
`;
const Ruler = styled.div`
  display: flex;
  height: 12px;
  font-size: 6px;
  line-height: 9px;
`;
const Second = styled.span`
  flex: 1 1 0;
  min-width: 0;
  &:last-child { flex: 0 0 0; }
`;
const SecondLabel = styled.span`display: block; width: 12px; margin-left: -5px;`;
const TickMark = styled.i`display: block; width: 1px; height: 3px; background: #777;`;
const WorkArea = styled.div`
  height: 9px;
  margin: 0 -3px;
  border: solid ${c.blue};
  border-width: 0 3px;
  background: #606060;
`;
const CacheLine = styled.div`height: 1px; margin: 1px 0; background: #0abf1c;`;
const Clip = styled.div`
  height: 10px;
  border-top: 1px solid #c08080;
  background: #a84848;
`;
const TrackEmpty = styled.div`flex: 1; background: #303030; margin-top: 1px;`;
const Playhead = styled.div`
  position: absolute;
  left: 3px;
  top: 13px;
  bottom: 0;
  width: 1px;
  background: ${c.blue};
`;
const PlayheadGrip = styled.span`
  position: absolute;
  left: -4px;
  top: 0;
`;
const EdgeIcons = styled.div`
  position: absolute;
  right: 1px;
  top: 22px;
  display: flex;
  flex-direction: column;
  gap: 4px;
`;

function TimelinePanel() {
  return (
    <Timeline>
      <Row $gap={24} $pad="0 0 0 17px">
        <Tab>渲染队列</Tab>
        <Tab $on><Icon name="close" size={3} color="#777" /><Chip $c={c.tan} />有趣的文本动画<Icon name="menu" size={5} weight={2} /></Tab>
      </Row>
      <TimelineBody>
        <div>
          <Row $h={22}>
            <Timecode>0:00:00:00<Frames>00000 (25.00 fps)</Frames></Timecode>
            <SearchBox $w={286}><Icon name="searchDown" size={8} /><SearchInput aria-label="搜索图层" /></SearchBox>
            <Row $gap={3} $pad="0 0 0 8px">
              <IconButton aria-label="flow"><Icon name="flow" size={9} /></IconButton>
              <Row $pad="0 4px"><IconButton aria-label="draft"><Icon name="draft" size={10} /></IconButton></Row>
              {["shy", "film", "blur"].map((n) => <IconButton key={n} aria-label={n}><Icon name={n} size={9} /></IconButton>)}
              <Row $pad="0 4px"><IconButton aria-label="graph"><Icon name="graph" size={9} /></IconButton></Row>
            </Row>
          </Row>
          <LayerTable>
            <colgroup>{[44, 18, 22, 119, 43, 11, 43, 70].map((w, i) => <Col key={i} $w={w} />)}<col /></colgroup>
            <thead>
              <tr>
                <th><Row $gap={2} $pad="0 0 0 4px"><Icon name="eye" size={7} /><Icon name="speaker" size={7} /><Icon name="dot" size={7} /><Icon name="lock" size={7} /></Row></th>
                <th><Row $pad="0 0 0 5px"><Icon name="tag" size={7} /></Row></th>
                <th>&nbsp;#</th><th>源名称</th><th>&nbsp;模式</th><th>&nbsp;&nbsp;T</th><th>&nbsp;TrkMat</th><th>&nbsp;&nbsp;父级</th>
                <th><Row $gap={2} $pad="0 0 0 1px">{["shy", "sun", "slashB"].map((n) => <Icon key={n} name={n} size={7} />)}<Fx>fx</Fx>{["film", "blur", "half", "cube"].map((n) => <Icon key={n} name={n} size={7} />)}</Row></th>
              </tr>
            </thead>
            <tbody>
              <tr>
                <td><Row $gap={2} $pad="0 0 0 4px"><Icon name="eye" size={7} /><Row $gap={2} $pad="0 0 0 9px"><Box /><Box /></Row></Row></td>
                <td><Row $gap={2}><Icon name="right" size={6} /><Chip $s={9} $c={c.red} /></Row></td>
                <td><b>&nbsp;1</b></td>
                <td><Row $gap={5}><b>T</b><NameInput aria-label="图层名称" defaultValue="......................................................" /></Row></td>
                <td><Select label="模式" value="正常" w={41} /></td>
                <td><Row $pad="0 1px"><Box /></Row></td><td />
                <td><Row $gap={4} $pad="0 0 0 3px"><Icon name="spiral" size={7} /><Select label="父级" value="无" w={54} /></Row></td>
                <td><Row $gap={2} $pad="0 0 0 1px">{["shy", "sun", "slash"].map((n) => <Icon key={n} name={n} size={7} />)}<Row $gap={2} $pad="0 0 0 18px"><Box /><Box /><Box /></Row></Row></td>
              </tr>
            </tbody>
          </LayerTable>
        </div>
        <Tracks>
          <Navigator />
          <Ruler>
            {["00s", "01s", "02s", "03s", "04s", "05s"].map((s) => <Second key={s}><SecondLabel>{s}</SecondLabel><TickMark /></Second>)}
          </Ruler>
          <WorkArea />
          <CacheLine />
          <Clip />
          <TrackEmpty />
          <Playhead><PlayheadGrip><Icon name="head" size={9} color={c.blue} /></PlayheadGrip></Playhead>
          <EdgeIcons><Icon name="marker" size={9} /><Icon name="target" size={9} /></EdgeIcons>
        </Tracks>
      </TimelineBody>
    </Timeline>
  );
}

/* ---------- watermark ---------- */
const Watermark = styled.div`
  position: absolute;
  right: 50px;
  bottom: 20px;
  width: 182px;
  color: #fff;
  opacity: 0.75;
  pointer-events: none;
`;
const MarkRow = styled.div`
  display: flex;
  align-items: flex-end;
  height: 60px;
  font-family: "Liberation Sans", "Noto Sans CJK SC", sans-serif;
  font-weight: 700;
`;
const Bai = styled.span`width: 61px; font-size: 40px; line-height: 36px;`;
const JingYan = styled.span`font-size: 30px; line-height: 36px; padding-left: 2px; white-space: nowrap;`;
const Address = styled.div`
  font-family: "Noto Sans", sans-serif;
  font-size: 21px;
  line-height: 24px;
  white-space: nowrap;
`;

export default function App() {
  return (
    <Shell>
      <Global />
      <WindowEdge />
      <TopBar />
      <Main>
        <Project />
        <Composition />
        <SidePanels />
      </Main>
      <TimelinePanel />
      <Watermark>
        <MarkRow>
          <Bai>Bai</Bai>
          <svg width="52" height="59" viewBox="0 0 52 59" fill="#fff">
            <ellipse cx="7" cy="22" rx="6.500" ry="9" />
            <ellipse cx="19" cy="9" rx="6.500" ry="9" />
            <ellipse cx="35" cy="10" rx="6.500" ry="9" transform="rotate(12 35 10)" />
            <ellipse cx="46" cy="26" rx="6.500" ry="8.500" />
            <path d="M26 24Q32 24 36 31L44 40Q50 48 45 54Q41 58 35 56Q26 54 17 56Q9 58 6 53Q2 46 9 39L17 30Q20 24 26 24Z" />
            <text x="13" y="50" fontFamily="Noto Sans" fontSize="22" fontWeight="500" fill="#2b2b2b">du</text>
          </svg>
          <JingYan>经验</JingYan>
        </MarkRow>
        <Address>jingyan.baidu.com</Address>
      </Watermark>
    </Shell>
  );
}
